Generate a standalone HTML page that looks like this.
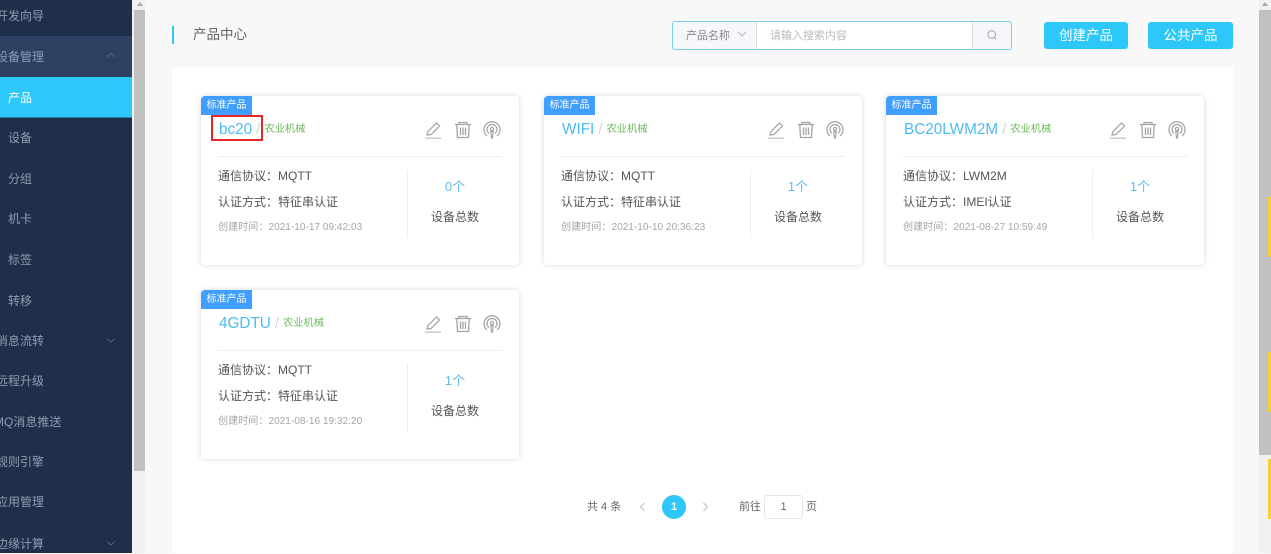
<!DOCTYPE html>
<html><head><meta charset="utf-8"><style>
html,body{margin:0;padding:0}
body{width:1271px;height:553px;overflow:hidden;position:relative;background:#f8f8f8;font-family:"Liberation Sans","Noto Sans CJK SC",sans-serif;color:#555}
.a{position:absolute;white-space:nowrap}
.side{left:0;top:0;width:132px;height:553px;background:#1f2e49}
.m{position:absolute;font-size:12px;line-height:20px;color:#8e9cb3;white-space:nowrap}
.card{position:absolute;width:318px;height:169px;background:#fff;border-radius:4px;box-shadow:0 0 6px rgba(0,0,0,.16)}
.tag{position:absolute;left:0;top:0;width:51px;height:19px;background:#409eff;color:#fff;font-size:10px;line-height:20px;text-align:center;border-radius:4px 0 0 0}
.t{position:absolute;left:18px;top:23px;font-size:15.3px;line-height:22px;color:#4dbbf3;white-space:nowrap}
.sl{color:#d5d5d5;font-size:15px;margin-left:4px}
.g{color:#6cbb5a;font-size:10.25px;margin-left:4px;position:relative;top:-2px}
.hr{position:absolute;left:17px;top:60px;width:284px;height:1px;background:#ebeef5}
.l{position:absolute;left:17px;font-size:12px;line-height:18px;color:#555;white-space:nowrap}
.d{position:absolute;left:17px;top:124px;font-size:10.1px;line-height:16px;color:#a5a5a5;white-space:nowrap}
.v{position:absolute;left:206px;top:74px;width:1px;height:68px;background:#ebeef5}
.n{position:absolute;left:206px;width:96px;top:81px;text-align:center;font-size:13px;line-height:20px;color:#5bbcf3}
.tt{position:absolute;left:206px;width:96px;top:112px;text-align:center;font-size:12px;line-height:18px;color:#555}
.ic{position:absolute;left:224px;top:24px}
.btn{position:absolute;top:22px;width:84px;height:27px;background:#2ec7f9;border-radius:3px;color:#fff;font-size:13.5px;line-height:27px;text-align:center}
</style></head><body>
<div class="a side"></div>
<div class="a" style="left:0;top:36px;width:132px;height:41px;background:#2e4163"></div>
<div class="a" style="left:0;top:77px;width:132px;height:40px;background:#2ec7f9"></div>
<div class="a" style="left:0;top:117px;width:132px;height:1px;background:#1f7fa6"></div>
<div class="m" style="left:-4px;top:6px">开发向导</div>
<div class="m" style="left:-4px;top:47px">设备管理</div>
<div class="m" style="left:8px;top:88px;color:#fff">产品</div>
<div class="m" style="left:8px;top:128px">设备</div>
<div class="m" style="left:8px;top:169px">分组</div>
<div class="m" style="left:8px;top:209px">机卡</div>
<div class="m" style="left:8px;top:250px">标签</div>
<div class="m" style="left:8px;top:291px">转移</div>
<div class="m" style="left:-4px;top:331px">消息流转</div>
<div class="m" style="left:-4px;top:371px">远程升级</div>
<div class="m" style="left:-6px;top:412px">MQ消息推送</div>
<div class="m" style="left:-4px;top:452px">规则引擎</div>
<div class="m" style="left:-4px;top:492px">应用管理</div>
<div class="m" style="left:-4px;top:534px">边缘计算</div>
<svg class="a" style="left:106px;top:52px" width="10" height="7"><path d="M1 5L5 1.5L9 5" fill="none" stroke="#55647e"/></svg>
<svg class="a" style="left:106px;top:337px" width="10" height="7"><path d="M1 1.5L5 5L9 1.5" fill="none" stroke="#55647e"/></svg>
<svg class="a" style="left:106px;top:540px" width="10" height="7"><path d="M1 1.5L5 5L9 1.5" fill="none" stroke="#55647e"/></svg>

<div class="a" style="left:132px;top:0;width:13px;height:553px;background:#f1f1f1"></div>
<div class="a" style="left:134px;top:10px;width:11px;height:461px;background:#c1c1c1"></div>
<svg class="a" style="left:136px;top:1px" width="8" height="6"><path d="M4 1L7 5H1Z" fill="#a8a8a8"/></svg>

<div class="a" style="left:172px;top:26px;width:1px;height:18px;background:#2ec7f9;border-left:1px solid #2ec7f9"></div>
<div class="a" style="left:193px;top:26px;font-size:13.5px;line-height:18px;color:#666">产品中心</div>

<div class="a" style="left:672px;top:21px;width:338px;height:27px;border:1px solid #79cdee;border-radius:3px;background:#fff"></div>
<div class="a" style="left:673px;top:22px;width:83px;height:27px;background:#f5f7fa;border-right:1px solid #dcdfe6;border-radius:3px 0 0 3px"></div>
<div class="a" style="left:686px;top:28px;font-size:11px;line-height:17px;color:#888">产品名称</div>
<svg class="a" style="left:737px;top:31px" width="10" height="7"><path d="M1 1L5 5L9 1" fill="none" stroke="#b4b8c0"/></svg>
<div class="a" style="left:770px;top:28px;font-size:11px;line-height:17px;color:#bbb">请输入搜索内容</div>
<div class="a" style="left:972px;top:22px;width:38px;height:27px;background:#f5f7fa;border-left:1px solid #dcdfe6;border-radius:0 3px 3px 0"></div>
<svg class="a" style="left:986px;top:29px" width="12" height="12"><circle cx="5.7" cy="5.5" r="3.8" fill="none" stroke="#9da1a8"/><path d="M8.5 8.4L10.2 10.2" stroke="#9da1a8"/></svg>
<div class="btn" style="left:1044px">创建产品</div>
<div class="btn" style="left:1148px;width:85px">公共产品</div>

<div class="a" style="left:172px;top:67px;width:1061px;height:486px;background:#fff"></div>

<div class="card" style="left:201px;top:96px"><div class="tag">标准产品</div>
<div class="t">bc20<span class="sl">/</span><span class="g">农业机械</span></div><div class="hr"></div>
<div class="l" style="top:71px">通信协议：MQTT</div><div class="l" style="top:97px">认证方式：特征串认证</div><div class="d">创建时间：2021-10-17 09:42:03</div>
<div class="v"></div><div class="n">0个</div><div class="tt">设备总数</div>
<svg class="ic" width="76" height="20" fill="none" stroke="#a3a3a3" stroke-width="1.2"><path d="M2 15L3 11.5L11.5 3L14.5 6L6 14.5Z"/><path d="M0 18.2H16" stroke="#c8c8c8" stroke-width="1.4"/><path d="M30 4.500H46M34 4.500V2.500H42V4.500M31.800 4.500L32.500 17.500H43.500L44.200 4.500M35.500 7.500V15M38 7.500V15M40.500 7.500V15" stroke-width="1.3"/><path d="M62 16A8 8 0 1 1 72 16M64 13.500A5 5 0 1 1 70 13.500"/><circle cx="67" cy="9" r="1.600"/><path d="M65.800 11.500H68.200L67.500 18H66.500Z"/></svg></div>

<div class="card" style="left:544px;top:96px"><div class="tag">标准产品</div>
<div class="t">WIFI<span class="sl">/</span><span class="g">农业机械</span></div><div class="hr"></div>
<div class="l" style="top:71px">通信协议：MQTT</div><div class="l" style="top:97px">认证方式：特征串认证</div><div class="d">创建时间：2021-10-10 20:36:23</div>
<div class="v"></div><div class="n">1个</div><div class="tt">设备总数</div>
<svg class="ic" width="76" height="20" fill="none" stroke="#a3a3a3" stroke-width="1.2"><path d="M2 15L3 11.5L11.5 3L14.5 6L6 14.5Z"/><path d="M0 18.2H16" stroke="#c8c8c8" stroke-width="1.4"/><path d="M30 4.500H46M34 4.500V2.500H42V4.500M31.800 4.500L32.500 17.500H43.500L44.200 4.500M35.500 7.500V15M38 7.500V15M40.500 7.500V15" stroke-width="1.3"/><path d="M62 16A8 8 0 1 1 72 16M64 13.500A5 5 0 1 1 70 13.500"/><circle cx="67" cy="9" r="1.600"/><path d="M65.800 11.500H68.200L67.500 18H66.500Z"/></svg></div>

<div class="card" style="left:886px;top:96px"><div class="tag">标准产品</div>
<div class="t">BC20LWM2M<span class="sl">/</span><span class="g">农业机械</span></div><div class="hr"></div>
<div class="l" style="top:71px">通信协议：LWM2M</div><div class="l" style="top:97px">认证方式：IMEI认证</div><div class="d">创建时间：2021-08-27 10:59:49</div>
<div class="v"></div><div class="n">1个</div><div class="tt">设备总数</div>
<svg class="ic" width="76" height="20" fill="none" stroke="#a3a3a3" stroke-width="1.2"><path d="M2 15L3 11.5L11.5 3L14.5 6L6 14.5Z"/><path d="M0 18.2H16" stroke="#c8c8c8" stroke-width="1.4"/><path d="M30 4.500H46M34 4.500V2.500H42V4.500M31.800 4.500L32.500 17.500H43.500L44.200 4.500M35.500 7.500V15M38 7.500V15M40.500 7.500V15" stroke-width="1.3"/><path d="M62 16A8 8 0 1 1 72 16M64 13.500A5 5 0 1 1 70 13.500"/><circle cx="67" cy="9" r="1.600"/><path d="M65.800 11.500H68.200L67.500 18H66.500Z"/></svg></div>

<div class="card" style="left:201px;top:290px"><div class="tag">标准产品</div>
<div class="t">4GDTU<span class="sl">/</span><span class="g">农业机械</span></div><div class="hr"></div>
<div class="l" style="top:71px">通信协议：MQTT</div><div class="l" style="top:97px">认证方式：特征串认证</div><div class="d">创建时间：2021-08-16 19:32:20</div>
<div class="v"></div><div class="n">1个</div><div class="tt">设备总数</div>
<svg class="ic" width="76" height="20" fill="none" stroke="#a3a3a3" stroke-width="1.2"><path d="M2 15L3 11.5L11.5 3L14.5 6L6 14.5Z"/><path d="M0 18.2H16" stroke="#c8c8c8" stroke-width="1.4"/><path d="M30 4.500H46M34 4.500V2.500H42V4.500M31.800 4.500L32.500 17.500H43.500L44.200 4.500M35.500 7.500V15M38 7.500V15M40.500 7.500V15" stroke-width="1.3"/><path d="M62 16A8 8 0 1 1 72 16M64 13.500A5 5 0 1 1 70 13.500"/><circle cx="67" cy="9" r="1.600"/><path d="M65.800 11.500H68.200L67.500 18H66.500Z"/></svg></div>

<div class="a" style="left:211px;top:115px;width:52px;height:26px;box-sizing:border-box;border:2px solid #e8262a"></div>

<div class="a" style="left:587px;top:499px;font-size:11px;line-height:17px;color:#666">共 4 条</div>
<svg class="a" style="left:639px;top:502px" width="7" height="10"><path d="M5.500 1L1.500 5L5.500 9" fill="none" stroke="#c0c4cc" stroke-width="1.200"/></svg>
<div class="a" style="left:662px;top:495px;width:24px;height:24px;border-radius:50%;background:#2ec7f9;color:#fff;font-size:11px;font-weight:bold;line-height:24px;text-align:center">1</div>
<svg class="a" style="left:702px;top:502px" width="7" height="10"><path d="M1.500 1L5.500 5L1.500 9" fill="none" stroke="#c0c4cc" stroke-width="1.200"/></svg>
<div class="a" style="left:739px;top:499px;font-size:11px;line-height:17px;color:#666">前往</div>
<div class="a" style="left:764px;top:495px;width:37px;height:22px;border:1px solid #e4e7ed;border-radius:3px;font-size:11px;line-height:22px;text-align:center;color:#666;background:#fff">1</div>
<div class="a" style="left:806px;top:499px;font-size:11px;line-height:17px;color:#666">页</div>

<div class="a" style="left:1259px;top:0;width:12px;height:553px;background:#f1f1f1"></div>
<div class="a" style="left:1259px;top:10px;width:12px;height:445px;background:#c1c1c1"></div>
<svg class="a" style="left:1261px;top:1px" width="8" height="6"><path d="M4 1L7 5H1Z" fill="#a8a8a8"/></svg>
<div class="a" style="left:1268px;top:197px;width:3px;height:60px;background:#f5d033"></div>
<div class="a" style="left:1268px;top:352px;width:3px;height:60px;background:#f5d033"></div>
<div class="a" style="left:1268px;top:459px;width:3px;height:60px;background:#f5d033"></div>
</body></html>
